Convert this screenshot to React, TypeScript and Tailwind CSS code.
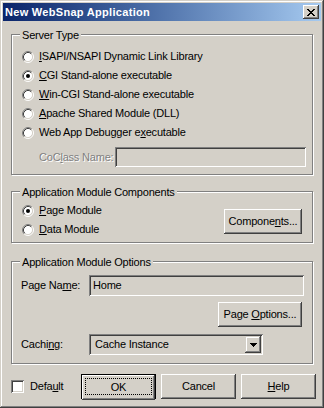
import React from "react";

const U = ({ children }: { children: React.ReactNode }) => (
  <span className="underline">{children}</span>
);

function Radio({ checked }: { checked?: boolean }) {
  return (
    <svg width="12" height="12" viewBox="0 0 12 12" className="shrink-0">
      <circle cx="6" cy="6" r="4.5" fill="#fff" />
      <path d="M2.11 9.89 A5.5 5.5 0 0 1 9.89 2.11" fill="none" stroke="#808080" />
      <path d="M9.89 2.11 A5.5 5.5 0 0 1 2.11 9.89" fill="none" stroke="#fff" />
      <path d="M2.82 9.18 A4.5 4.5 0 0 1 9.18 2.82" fill="none" stroke="#404040" />
      <path d="M9.18 2.82 A4.5 4.5 0 0 1 2.82 9.18" fill="none" stroke="#d4d0c8" />
      {checked && <circle cx="6" cy="6" r="2" fill="#000" />}
    </svg>
  );
}

function RadioRow({ checked, children }: { checked?: boolean; children: React.ReactNode }) {
  return (
    <div className="h-[19px] flex items-center gap-[5px]">
      <Radio checked={checked} />
      <span className="whitespace-nowrap">{children}</span>
    </div>
  );
}

function Group({
  label,
  className,
  children,
}: {
  label: string;
  className: string;
  children: React.ReactNode;
}) {
  return (
    <div
      className={
        "relative w-[302px] border border-[#808080] shadow-[inset_1px_1px_#fff,1px_1px_#fff] " +
        className
      }
    >
      <span className="absolute left-[8px] top-[-6px] px-[2px] bg-[#d4d0c8] whitespace-nowrap">
        {label}
      </span>
      {children}
    </div>
  );
}

function Btn({ children, className = "" }: { children: React.ReactNode; className?: string }) {
  return (
    <div
      className={
        "h-[25px] shrink-0 flex items-center justify-center bg-[#d4d0c8] shadow-[inset_-1px_-1px_#404040,inset_1px_1px_#fff,inset_-2px_-2px_#808080,inset_2px_2px_#d4d0c8] " +
        className
      }
    >
      <span className="whitespace-nowrap">{children}</span>
    </div>
  );
}

export default function App() {
  return (
    <div className="w-[324px] h-[408px] bg-[#d4d0c8] p-[3px] shadow-[inset_-1px_-1px_#404040,inset_1px_1px_#d4d0c8,inset_-2px_-2px_#808080,inset_2px_2px_#fff] text-[11px] leading-[13px] text-black tracking-[-0.2px] font-['Liberation_Sans',Arial,sans-serif]">
      {/* Title bar */}
      <div className="h-[18px] flex items-center justify-between bg-linear-to-r from-[#0a246a] to-[#a6caf0] pl-[2px] pr-[2px]">
        <span className="text-white font-bold tracking-[0.3px]">New WebSnap Application</span>
        <div className="w-[16px] h-[14px] bg-[#d4d0c8] flex items-center justify-center shadow-[inset_-1px_-1px_#404040,inset_1px_1px_#fff,inset_-2px_-2px_#808080,inset_2px_2px_#d4d0c8]">
          <svg width="8" height="7" viewBox="0 0 8 7" shapeRendering="crispEdges">
            <path
              d="M0 0h2v1H0zM6 0h2v1H6zM1 1h2v1H1zM5 1h2v1H5zM2 2h4v1H2zM3 3h2v1H3zM2 4h4v1H2zM1 5h2v1H1zM5 5h2v1H5zM0 6h2v1H0zM6 6h2v1H6z"
              fill="#000"
            />
          </svg>
        </div>
      </div>

      <div className="pl-[8px]">
        {/* Server Type */}
        <Group label="Server Type" className="mt-[13px] h-[141px] pt-[12px] pl-[10px]">
          <RadioRow>
            <U>I</U>SAPI/NSAPI Dynamic Link Library
          </RadioRow>
          <RadioRow checked>
            <U>C</U>GI Stand-alone executable
          </RadioRow>
          <RadioRow>
            <U>W</U>in-CGI Stand-alone executable
          </RadioRow>
          <RadioRow>
            <U>A</U>pache Shared Module (DLL)
          </RadioRow>
          <RadioRow>
            Web App Debugger e<U>x</U>ecutable
          </RadioRow>
          <div className="flex items-center mt-[5px] h-[20px] pl-[17px]">
            <span className="w-[76px] shrink-0 text-[#808080] [text-shadow:1px_1px_0_#fff] whitespace-nowrap">
              CoC<span className="underline">l</span>ass Name:
            </span>
            <div className="w-[191px] h-[20px] shrink-0 bg-[#d4d0c8] shadow-[inset_1px_1px_#808080,inset_-1px_-1px_#fff,inset_2px_2px_#404040,inset_-2px_-2px_#d4d0c8]" />
          </div>
        </Group>

        {/* Application Module Components */}
        <Group
          label="Application Module Components"
          className="mt-[16px] h-[52px] flex justify-between"
        >
          <div className="pt-[9px] pl-[10px]">
            <RadioRow checked>
              <U>P</U>age Module
            </RadioRow>
            <RadioRow>
              <U>D</U>ata Module
            </RadioRow>
          </div>
          <Btn className="w-[78px] mt-[17px] mr-[10px] self-start">
            Compone<U>n</U>ts...
          </Btn>
        </Group>

        {/* Application Module Options */}
        <Group label="Application Module Options" className="mt-[18px] h-[103px] pt-[13px] pl-[9px]">
          <div className="flex items-center h-[21px]">
            <span className="w-[68px] shrink-0 whitespace-nowrap">
              Page Na<U>m</U>e:
            </span>
            <div className="w-[215px] h-[21px] shrink-0 flex items-center pl-[4px] bg-[#d4d0c8] shadow-[inset_1px_1px_#808080,inset_-1px_-1px_#fff,inset_2px_2px_#404040,inset_-2px_-2px_#d4d0c8]">
              Home
            </div>
          </div>
          <div className="flex justify-end mt-[6px] pr-[10px]">
            <Btn className="w-[84px]">
              Page <U>O</U>ptions...
            </Btn>
          </div>
          <div className="flex items-center mt-[7px] h-[21px]">
            <span className="w-[68px] shrink-0 whitespace-nowrap">
              Cachi<U>n</U>g:
            </span>
            <div className="w-[174px] h-[21px] shrink-0 flex items-center justify-between pl-[6px] pr-[2px] bg-[#d4d0c8] shadow-[inset_1px_1px_#808080,inset_-1px_-1px_#fff,inset_2px_2px_#404040,inset_-2px_-2px_#d4d0c8]">
              <span>Cache Instance</span>
              <div className="w-[16px] h-[17px] flex items-center justify-center bg-[#d4d0c8] shadow-[inset_-1px_-1px_#404040,inset_1px_1px_#d4d0c8,inset_-2px_-2px_#808080,inset_2px_2px_#fff]">
                <svg width="7" height="4" viewBox="0 0 7 4" shapeRendering="crispEdges">
                  <path d="M0 0h7v1H0zM1 1h5v1H1zM2 2h3v1H2zM3 3h1v1H3z" fill="#000" />
                </svg>
              </div>
            </div>
          </div>
        </Group>

        {/* Bottom row */}
        <div className="flex items-center mt-[10px] h-[25px]">
          <div className="w-[70px] shrink-0 flex items-center gap-[6px]">
            <div className="w-[13px] h-[13px] bg-white shadow-[inset_1px_1px_#808080,inset_-1px_-1px_#fff,inset_2px_2px_#404040,inset_-2px_-2px_#d4d0c8]" />
            <span>
              Defa<U>u</U>lt
            </span>
          </div>
          <div className="flex gap-[5px]">
            <div className="relative w-[75px] h-[25px] border border-black">
              <Btn className="h-[23px] w-full">OK</Btn>
              <div className="absolute inset-[3px] border border-dotted border-black" />
            </div>
            <Btn className="w-[75px]">Cancel</Btn>
            <Btn className="w-[75px]">
              <U>H</U>elp
            </Btn>
          </div>
        </div>
      </div>
    </div>
  );
}
